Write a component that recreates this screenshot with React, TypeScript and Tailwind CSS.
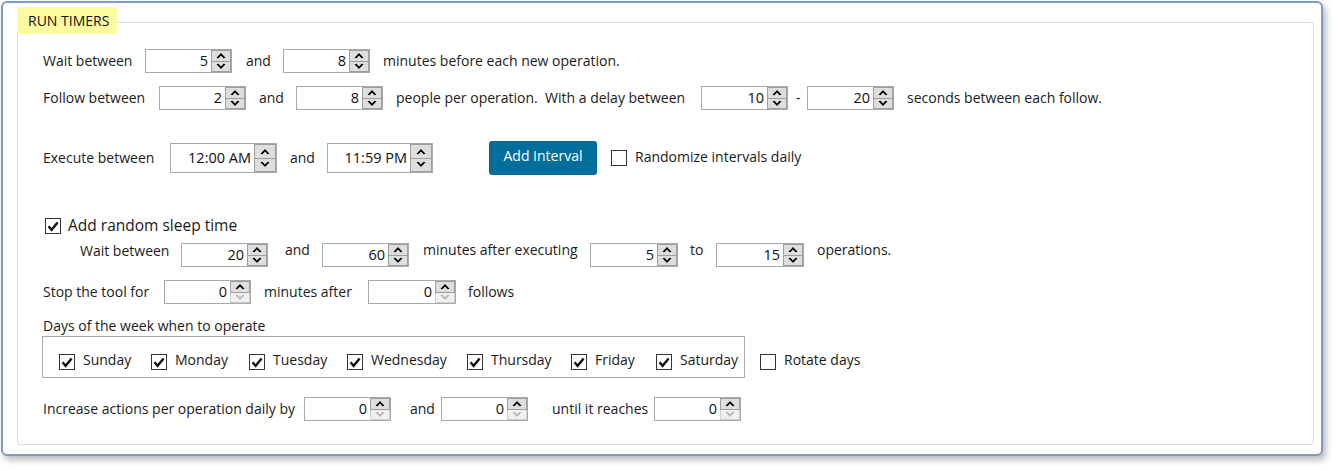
import React from 'react';

const Arrow = ({ up, disabled }: { up?: boolean; disabled?: boolean }) => (
  <svg width="10" height="7" viewBox="0 0 10 7" className={up ? '' : 'rotate-180'}>
    <path d="M0.5 5.8 L5 1 L9.5 5.8 L7.6 6.3 L5 3.6 L2.4 6.3 Z" fill={disabled ? '#b4b4b4' : '#000000'} />
  </svg>
);

interface SpinProps {
  value: string;
  w?: string;
  tall?: boolean;
  downDisabled?: boolean;
}

const Spin: React.FC<SpinProps> = ({ value, w = 'w-[87px]', tall, downDisabled }) => (
  <div className={`flex shrink-0 border border-[#a9a9a9] bg-white ${w} ${tall ? 'h-[30px]' : 'h-[24px]'}`}>
    <div className="flex-1 flex items-center justify-end pr-[3px] pb-[1px] text-[14.5px] text-[#101010]">{value}</div>
    <div className={`flex flex-col ${tall ? 'w-[22px]' : 'w-[20px]'}`}>
      <div className="flex-1 flex items-center justify-center bg-[#dedede] border border-[#9e9e9e]">
        <Arrow up />
      </div>
      <div
        className={`flex-1 flex items-center justify-center border border-t-0 ${
          downDisabled ? 'bg-[#f0f0f0] border-[#cfcfcf]' : 'bg-[#dedede] border-[#9e9e9e]'
        }`}
      >
        <Arrow disabled={downDisabled} />
      </div>
    </div>
  </div>
);

const Check = ({ checked }: { checked?: boolean }) => (
  <div className="w-[16px] h-[16px] shrink-0 border border-[#333333] bg-white flex items-center justify-center">
    {checked && (
      <svg width="12" height="11" viewBox="0 0 12 11">
        <path d="M1.5 5.3 L4.6 8.8 L10.6 1.6" stroke="#111111" strokeWidth="2.4" fill="none" />
      </svg>
    )}
  </div>
);

const Lbl = ({ children, className = '' }: { children: React.ReactNode; className?: string }) => (
  <span className={`shrink-0 whitespace-nowrap relative -top-[1px] ${className}`}>{children}</span>
);

const days = [
  { name: 'Sunday', w: 'w-[92px]' },
  { name: 'Monday', w: 'w-[98px]' },
  { name: 'Tuesday', w: 'w-[98px]' },
  { name: 'Wednesday', w: 'w-[120px]' },
  { name: 'Thursday', w: 'w-[104px]' },
  { name: 'Friday', w: 'w-[85px]' },
  { name: 'Saturday', w: 'w-[86px]' },
];

export default function App() {
  return (
    <div className="w-[1338px] h-[471px] bg-white pl-[1px] pt-[1px] font-['Open_Sans',sans-serif] text-[14px] text-[#1a1a1a]">
      <div className="w-[1322px] h-[455px] border-2 border-[#7f9bc4] rounded-[6px] bg-white shadow-[3px_4px_7px_rgba(0,0,0,0.28)] pl-[14px] pt-[19px]">
        <div className="relative w-[1297px] h-[423px] border border-[#d5dfe5] rounded-[3px]">
          <div className="absolute left-[-1px] top-[-16px] w-[100px] h-[27px] bg-[#fdfb9f] pl-[11px] flex items-center text-[14px] text-[#111]">
            RUN TIMERS
          </div>

          <div className="pl-[25px] pt-[26px] flex flex-col">
            {/* row 1 */}
            <div className="flex items-center h-[24px]">
              <Lbl className="w-[102px]">Wait between</Lbl>
              <Spin value="5" />
              <Lbl className="w-[51px] pl-[14px]">and</Lbl>
              <Spin value="8" />
              <Lbl className="pl-[13px]">minutes before each new operation.</Lbl>
            </div>

            {/* row 2 */}
            <div className="flex items-center h-[24px] mt-[13px]">
              <Lbl className="w-[116px]">Follow between</Lbl>
              <Spin value="2" />
              <Lbl className="w-[50px] pl-[13px]">and</Lbl>
              <Spin value="8" />
              <Lbl className="w-[318px] pl-[13px]">people per operation.&nbsp; With a delay between</Lbl>
              <Spin value="10" />
              <Lbl className="w-[19px] pl-[8px]">-</Lbl>
              <Spin value="20" />
              <Lbl className="pl-[13px]">seconds between each follow.</Lbl>
            </div>

            {/* row 3 */}
            <div className="flex items-center h-[34px] mt-[31px]">
              <Lbl className="w-[127px]">Execute between</Lbl>
              <Spin value="12:00 AM" w="w-[107px]" tall />
              <Lbl className="w-[50px] pl-[13px]">and</Lbl>
              <Spin value="11:59 PM" w="w-[106px]" tall />
              <button className="ml-[56px] w-[108px] h-[34px] shrink-0 rounded-[3px] bg-[#006d9b] text-white text-[14px] pb-[6px]">
                Add Interval
              </button>
              <div className="ml-[14px] flex items-center gap-[8px]">
                <Check />
                <Lbl className="leading-[16px]">Randomize intervals daily</Lbl>
              </div>
            </div>

            {/* row 4 */}
            <div className="flex items-center h-[16px] mt-[43px] ml-[2px] gap-[7px]">
              <Check checked />
              <Lbl className="text-[15.5px] leading-[16px]">Add random sleep time</Lbl>
            </div>

            {/* row 5 */}
            <div className="flex items-center h-[24px] mt-[9px] pl-[37px]">
              <Lbl className="w-[101px] pb-[8px]">Wait between</Lbl>
              <Spin value="20" />
              <Lbl className="w-[54px] pl-[17px] pb-[9px]">and</Lbl>
              <Spin value="60" />
              <Lbl className="w-[181px] pl-[14px] pb-[9px]">minutes after executing</Lbl>
              <Spin value="5" w="w-[88px]" />
              <Lbl className="w-[38px] pl-[12px] pb-[9px]">to</Lbl>
              <Spin value="15" w="w-[88px]" />
              <Lbl className="pl-[13px] pb-[9px]">operations.</Lbl>
            </div>

            {/* row 6 */}
            <div className="flex items-center h-[24px] mt-[13px]">
              <Lbl className="w-[121px]">Stop the tool for</Lbl>
              <Spin value="0" downDisabled />
              <Lbl className="w-[117px] pl-[13px]">minutes after</Lbl>
              <Spin value="0" w="w-[88px]" downDisabled />
              <Lbl className="pl-[12px]">follows</Lbl>
            </div>

            {/* row 7 */}
            <div className="mt-[12px] h-[20px] flex items-center">
              <Lbl>Days of the week when to operate</Lbl>
            </div>
            <div className="flex items-start -ml-[1px]">
              <div className="w-[703px] h-[42px] border border-[#a9a9a9] flex items-start pl-[16px] pt-[17px]">
                {days.map((d) => (
                  <div key={d.name} className={`flex items-center h-[16px] gap-[8px] ${d.w}`}>
                    <Check checked />
                    <Lbl className="leading-[16px] -translate-y-[1px]">{d.name}</Lbl>
                  </div>
                ))}
              </div>
              <div className="ml-[15px] mt-[18px] flex items-center h-[16px] gap-[8px]">
                <Check />
                <Lbl className="leading-[16px] -translate-y-[1px]">Rotate days</Lbl>
              </div>
            </div>

            {/* row 8 */}
            <div className="flex items-center h-[24px] mt-[19px]">
              <Lbl className="w-[261px]">Increase actions per operation daily by</Lbl>
              <Spin value="0" downDisabled />
              <Lbl className="w-[50px] pl-[19px]">and</Lbl>
              <Spin value="0" downDisabled />
              <Lbl className="w-[126px] pl-[24px]">until it reaches</Lbl>
              <Spin value="0" downDisabled />
            </div>
          </div>
        </div>
      </div>
    </div>
  );
}
